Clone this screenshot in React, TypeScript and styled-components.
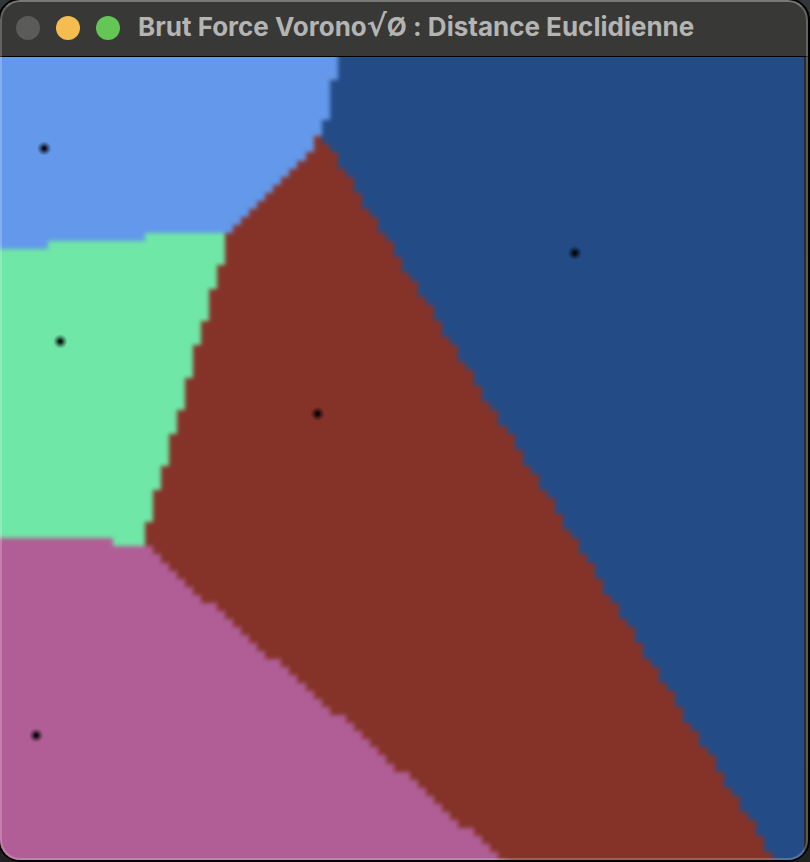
import React from "react";
import styled, { createGlobalStyle } from "styled-components";

const GlobalStyle = createGlobalStyle`
  *, *::before, *::after { box-sizing: border-box; }
  html, body, #root { height: 100%; margin: 0; }
  body { background: linear-gradient(#30363a, #202122); overflow: hidden; }
`;

const Desktop = styled.main`
  display: flex;
  height: 100%;
  padding: 0 2px 2px 0;
`;

const Window = styled.section`
  position: relative;
  flex: 1;
  min-width: 0;
  display: flex;
  flex-direction: column;
  overflow: hidden;
  border-radius: 20px;
  background: #383836;
  box-shadow: 0 0 0 2px #000;

  &::after {
    content: "";
    position: absolute;
    z-index: 2;
    inset: 0;
    border: 2px solid rgba(255, 255, 255, 0.22);
    border-top-color: rgba(255, 255, 255, 0.32);
    border-radius: 20px;
    pointer-events: none;
  }
`;

const TitleBar = styled.header`
  position: relative;
  z-index: 1;
  display: flex;
  align-items: center;
  height: 56px;
  padding: 0 16px;
  flex: none;
  gap: 18px;
  box-shadow: 0 1px 0 #000;
`;

const Controls = styled.div`
  display: flex;
  gap: 16px;
`;

const ControlButton = styled.button<{ $color: string }>`
  width: 24px;
  height: 24px;
  padding: 0;
  border: 0;
  border-radius: 50%;
  background: ${({ $color }) => $color};
`;

const Title = styled.h1`
  margin: 0;
  padding-bottom: 2px;
  color: #b4b4b2;
  font: 700 26px/32px Inter, "Liberation Sans", sans-serif;
  font-feature-settings: "calt" 0;
  white-space: nowrap;
`;

const Radical = styled.span`
  font-family: "DejaVu Sans", sans-serif;
  font-size: 30px;
  line-height: 1;
`;

const Content = styled.div`
  flex: 1;
  min-height: 0;
  padding-right: 4px;
  background: #2b2b2b;
`;

const Diagram = styled.svg`
  display: block;
  width: 100%;
  height: 100%;
`;

interface Site {
  x: number;
  y: number;
  color: string;
}

const GRID = 100;

const SITES: Site[] = [
  { x: 71, y: 24, color: "#234c87" },
  { x: 7, y: 35, color: "#6fe7a6" },
  { x: 5, y: 11, color: "#6398ea" },
  { x: 39, y: 44, color: "#853329" },
  { x: 4, y: 84, color: "#b05e95" },
];

function nearestSite(x: number, y: number): number {
  let best = 0;
  let bestDistance = Infinity;
  SITES.forEach((site, index) => {
    const distance = (site.x - x) ** 2 + (site.y - y) ** 2;
    if (distance < bestDistance) {
      best = index;
      bestDistance = distance;
    }
  });
  return best;
}

// Horizontal runs of cells per site; one extra cell on every side keeps the
// softened edges away from the border of the view.
function buildRegions(): string[] {
  const paths = SITES.map(() => "");
  for (let y = -1; y <= GRID; y++) {
    let start = -1;
    let owner = nearestSite(-1, y);
    for (let x = 0; x <= GRID + 1; x++) {
      const next = x > GRID ? -1 : nearestSite(x, y);
      if (next !== owner) {
        paths[owner] += `M${start} ${y}H${x}V${y + 1}H${start}Z`;
        start = x;
        owner = next;
      }
    }
  }
  return paths;
}

const REGIONS = buildRegions();

const CONTROLS = [
  { label: "Close", color: "#5b5b5a" },
  { label: "Minimize", color: "#f5bd4f" },
  { label: "Zoom", color: "#63c655" },
];

export default function App() {
  return (
    <>
      <GlobalStyle />
      <Desktop>
        <Window>
          <TitleBar>
            <Controls>
              {CONTROLS.map(({ label, color }) => (
                <ControlButton key={label} type="button" aria-label={label} $color={color} />
              ))}
            </Controls>
            <Title>
              Brut Force Vorono<Radical>√</Radical>Ø : Distance Euclidienne
            </Title>
          </TitleBar>
          <Content>
            <Diagram
              viewBox={`0 0 ${GRID} ${GRID}`}
              preserveAspectRatio="none"
              role="img"
              aria-label="Voronoi diagram"
            >
              <defs>
                <filter id="soften" filterUnits="userSpaceOnUse" x="-1" y="-1" width="102" height="102">
                  <feGaussianBlur stdDeviation="0.24" colorInterpolationFilters="sRGB" />
                </filter>
                <radialGradient id="dot">
                  <stop offset="0" stopColor="#000" />
                  <stop offset="0.25" stopColor="#000" stopOpacity="0.8" />
                  <stop offset="0.6" stopColor="#000" stopOpacity="0.35" />
                  <stop offset="1" stopColor="#000" stopOpacity="0" />
                </radialGradient>
              </defs>
              <g filter="url(#soften)" shapeRendering="crispEdges">
                {REGIONS.map((d, i) => (
                  <path key={i} d={d} fill={SITES[i].color} />
                ))}
              </g>
              {SITES.map(({ x, y }) => (
                <circle key={`${x}-${y}`} cx={x + 0.5} cy={y + 0.5} r="0.9" fill="url(#dot)" />
              ))}
            </Diagram>
          </Content>
        </Window>
      </Desktop>
    </>
  );
}
